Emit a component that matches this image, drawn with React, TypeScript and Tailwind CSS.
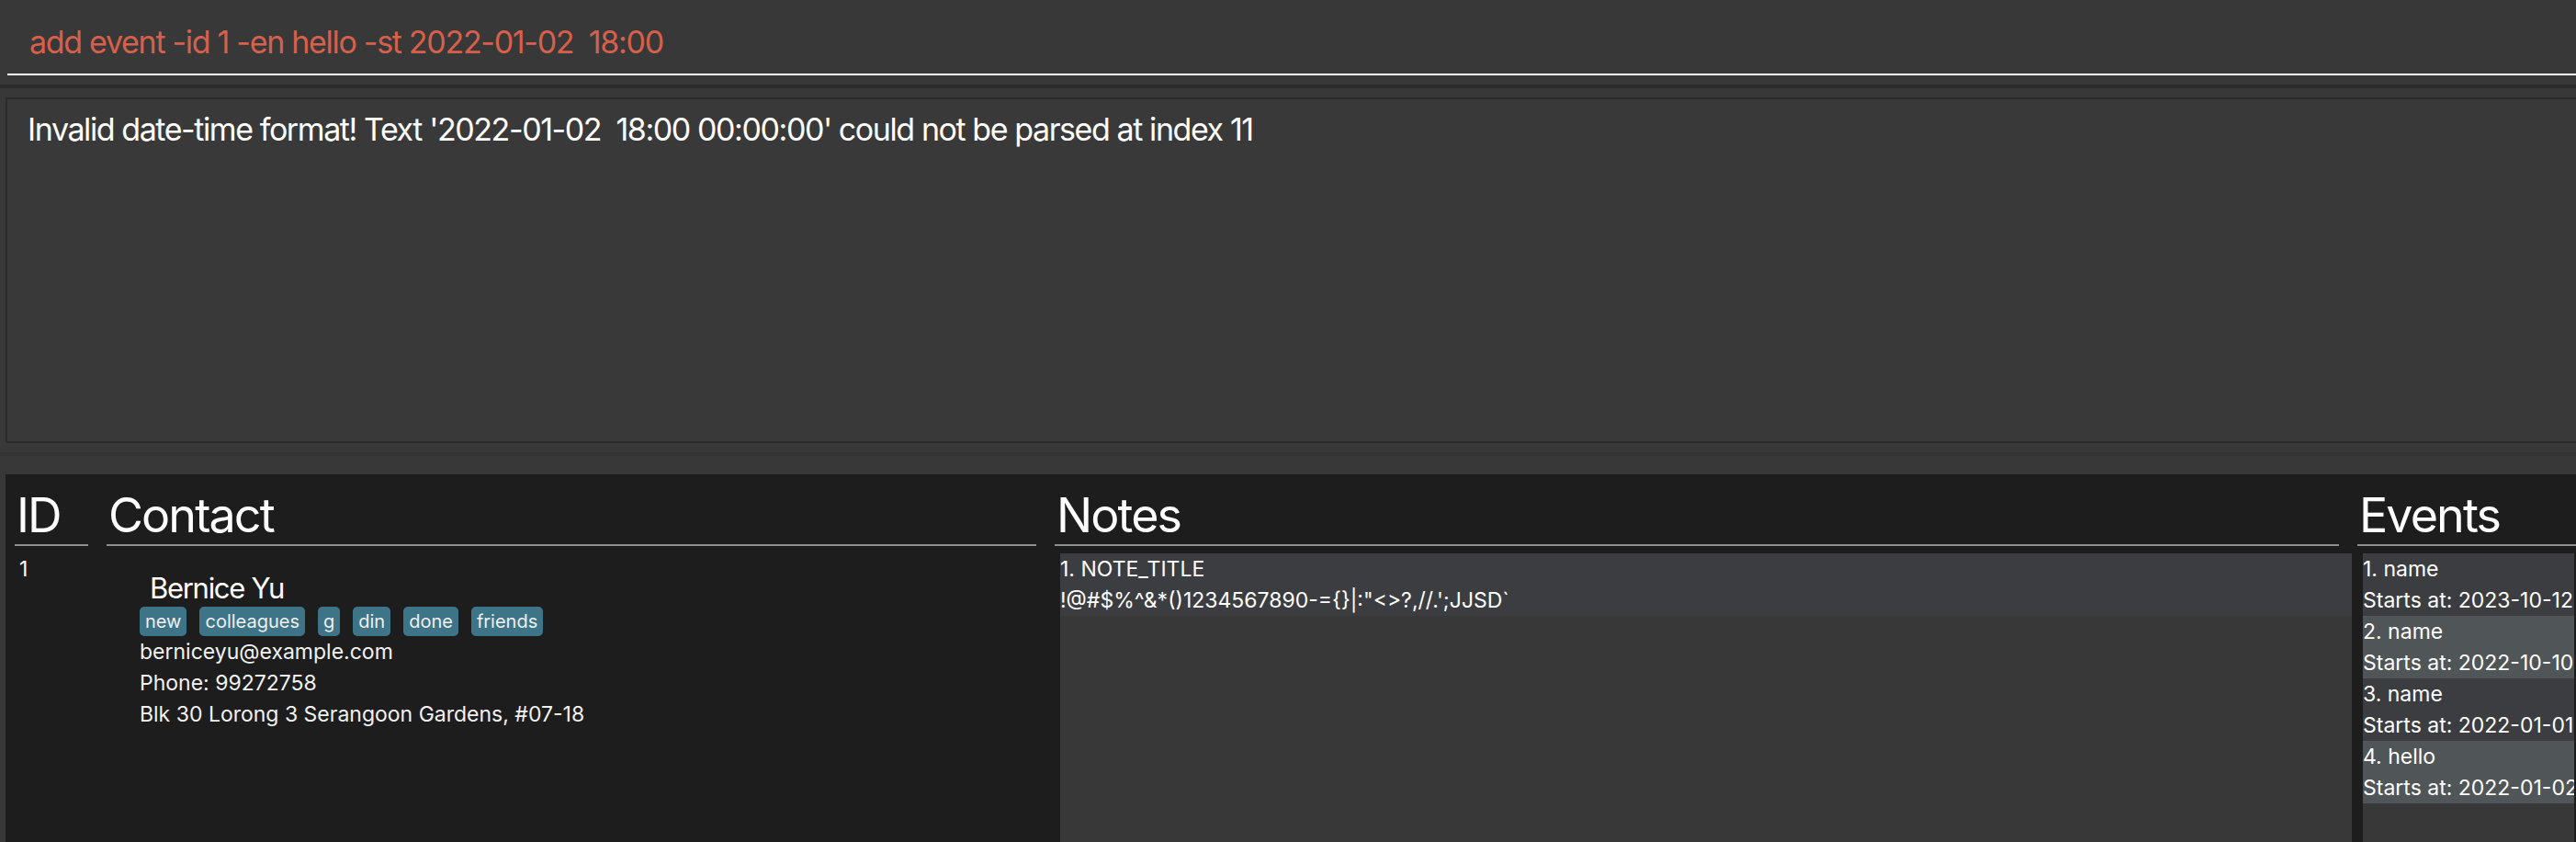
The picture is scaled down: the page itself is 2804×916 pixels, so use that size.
import React from "react";

const tags = ["new", "colleagues", "g", "din", "done", "friends"];

const events = [
  { t: "1. name", s: "Starts at: 2023-10-12 12:00" },
  { t: "2. name", s: "Starts at: 2022-10-10 10:00" },
  { t: "3. name", s: "Starts at: 2022-01-01 12:00" },
  { t: "4. hello", s: "Starts at: 2022-01-02 18:00" },
];

function Header({ title, underlineClass }: { title: string; underlineClass: string }) {
  return (
    <div className="shrink-0">
      <div className="h-[76px] pt-[15px] pl-[2px] text-[52px] leading-[60px] tracking-[-1.9px] text-white whitespace-nowrap">
        {title}
      </div>
      <div className={"h-[2px] bg-[#8e8e8e] " + underlineClass} />
    </div>
  );
}

export default function App() {
  return (
    <div className="w-[2804px] h-[916px] bg-[#383838] overflow-hidden flex flex-col [font-family:Inter,sans-serif]">
      {/* command box */}
      <div className="h-[92px] shrink-0 pl-[8px] flex flex-col">
        <div className="h-[80px] pt-[26px] pl-[24px] text-[34px] leading-[40px] tracking-[-1.3px] text-[#d6604c] whitespace-pre">
          add event -id 1 -en hello -st 2022-01-02  18:00
        </div>
        <div className="h-[2px] bg-white" />
      </div>
      <div className="h-[4px] shrink-0 bg-[#2b2b2b]" />
      {/* result display */}
      <div className="pt-[10px] pl-[6px] shrink-0">
        <div className="h-[376px] border-l-2 border-t-2 border-b-2 border-[#2b2b2b] bg-[#393939] pt-[13px] pl-[22px] text-[34px] leading-[40px] tracking-[-1.42px] text-white whitespace-pre">
          Invalid date-time format! Text '2022-01-02  18:00 00:00:00' could not be parsed at index 11
        </div>
      </div>
      <div className="h-[10px] shrink-0" />
      <div className="h-[4px] shrink-0 bg-[#333333]" />
      <div className="h-[20px] shrink-0" />
      {/* main panel */}
      <div className="flex-1 min-h-0 ml-[6px] bg-[#1d1d1d] pl-[10px] flex overflow-hidden">
        {/* ID column */}
        <div className="w-[100px] shrink-0 flex flex-col">
          <Header title="ID" underlineClass="mr-[20px]" />
          <div className="mt-[8px] pl-[5px] text-[23px] leading-[34px] text-white">1</div>
        </div>
        {/* Contact column */}
        <div className="w-[1032px] shrink-0 flex flex-col">
          <Header title="Contact" underlineClass="mr-[20px]" />
          <div className="mt-[8px] pl-[36px] pt-[18px] flex flex-col text-[#f2f2f2]">
            <div className="pl-[11px] text-[31px] leading-[40px] tracking-[-1.3px] text-white">Bernice Yu</div>
            <div className="flex gap-[14px]">
              {tags.map((t) => (
                <span
                  key={t}
                  className="h-[32px] px-[6px] rounded-[5px] bg-[#3d7487] text-[20px] leading-[32px] text-[#f0f0f0]"
                >
                  {t}
                </span>
              ))}
            </div>
            <div className="text-[23px] leading-[34px]">berniceyu@example.com</div>
            <div className="text-[23px] leading-[34px]">Phone: 99272758</div>
            <div className="text-[23px] leading-[34px]">Blk 30 Lorong 3 Serangoon Gardens, #07-18</div>
          </div>
        </div>
        {/* Notes column */}
        <div className="w-[1418px] shrink-0 flex flex-col">
          <Header title="Notes" underlineClass="mr-[20px]" />
          <div className="flex-1 mt-[8px] ml-[6px] mr-[6px] bg-[#383838] overflow-hidden">
            <div className="h-[68px] bg-[#3c3d40] text-[23px] leading-[34px] text-white whitespace-pre">
              <div>1. NOTE_TITLE</div>
              <div>{"!@#$%^&*()1234567890-={}|:\"<>?,//.';JJSD`"}</div>
            </div>
          </div>
        </div>
        {/* Events column */}
        <div className="w-[238px] shrink-0 flex flex-col">
          <Header title="Events" underlineClass="" />
          <div className="flex-1 mt-[8px] ml-[6px] mr-[2px] bg-[#383838] overflow-hidden">
            {events.map((e, i) => (
              <div
                key={e.t}
                className={
                  i % 2 === 0
                    ? "h-[68px] bg-[#3c3d40] text-[23px] leading-[34px] text-white whitespace-nowrap overflow-hidden"
                    : "h-[68px] bg-[#505557] text-[23px] leading-[34px] text-white whitespace-nowrap overflow-hidden"
                }
              >
                <div>{e.t}</div>
                <div>{e.s}</div>
              </div>
            ))}
          </div>
        </div>
      </div>
    </div>
  );
}
